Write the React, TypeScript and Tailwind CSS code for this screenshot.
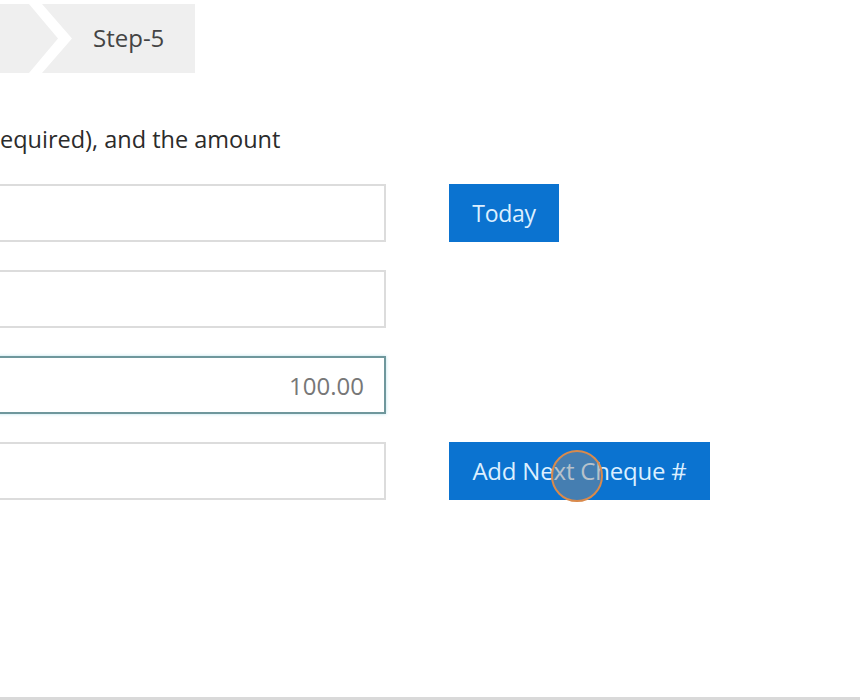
import React from 'react';

const inputCls =
  'h-[58px] w-[390px] -ml-1 border-2 border-[#dcdcdc] bg-white px-5 text-[24px] text-[#777] outline-none';

export default function App() {
  return (
    <div className="relative flex h-[700px] w-[860px] flex-col overflow-hidden bg-white font-['Open_Sans',sans-serif] text-[#333]">
      {/* stepper */}
      <div className="mt-1 flex h-[69px]">
        <div className="h-full w-[58px] bg-[#efefef] [clip-path:polygon(0_0,29px_0,58px_50%,29px_100%,0_100%)]" />
        <div className="-ml-4 flex h-full w-[153px] items-center bg-[#efefef] pb-px pl-[51px] text-[24px] text-[#444] [clip-path:polygon(0_0,100%_0,100%_100%,0_100%,30px_50%)]">
          Step-5
        </div>
      </div>

      <p className="mt-[51px] text-[23.5px] leading-[30px] text-[#2b2b2b]">equired), and the amount</p>

      <div className="mt-[30px] flex flex-col gap-[28px]">
        <div className="flex items-center">
          <input className={inputCls} />
          <button className="ml-[63px] h-[58px] w-[110px] bg-[#0b73d0] text-[23px] tracking-[-0.3px] text-[#dcefff]">Today</button>
        </div>
        <div className="flex items-center">
          <input className={inputCls} />
        </div>
        <div className="flex items-center">
          <input
            className="h-[58px] w-[390px] -ml-1 border-2 border-[#6f979c] bg-white px-5 text-right text-[24px] text-[#777] shadow-[0_0_3px_rgba(120,200,220,0.5)] outline-none"
            defaultValue="100.00"
          />
        </div>
        <div className="flex items-center">
          <input className={inputCls} />
          <button className="relative ml-[63px] h-[58px] w-[261px] bg-[#0b73d0] text-[24px] tracking-[-0.2px] text-[#dcefff]">
            Add Next Cheque #
            <span className="absolute left-[102px] top-[8px] h-[52px] w-[52px] rounded-full border-2 border-[#d98a4c] bg-[rgba(140,140,140,0.45)]" />
          </button>
        </div>
      </div>

      <div className="mt-auto h-[3px] bg-[#d9d9d9]" />
    </div>
  );
}
